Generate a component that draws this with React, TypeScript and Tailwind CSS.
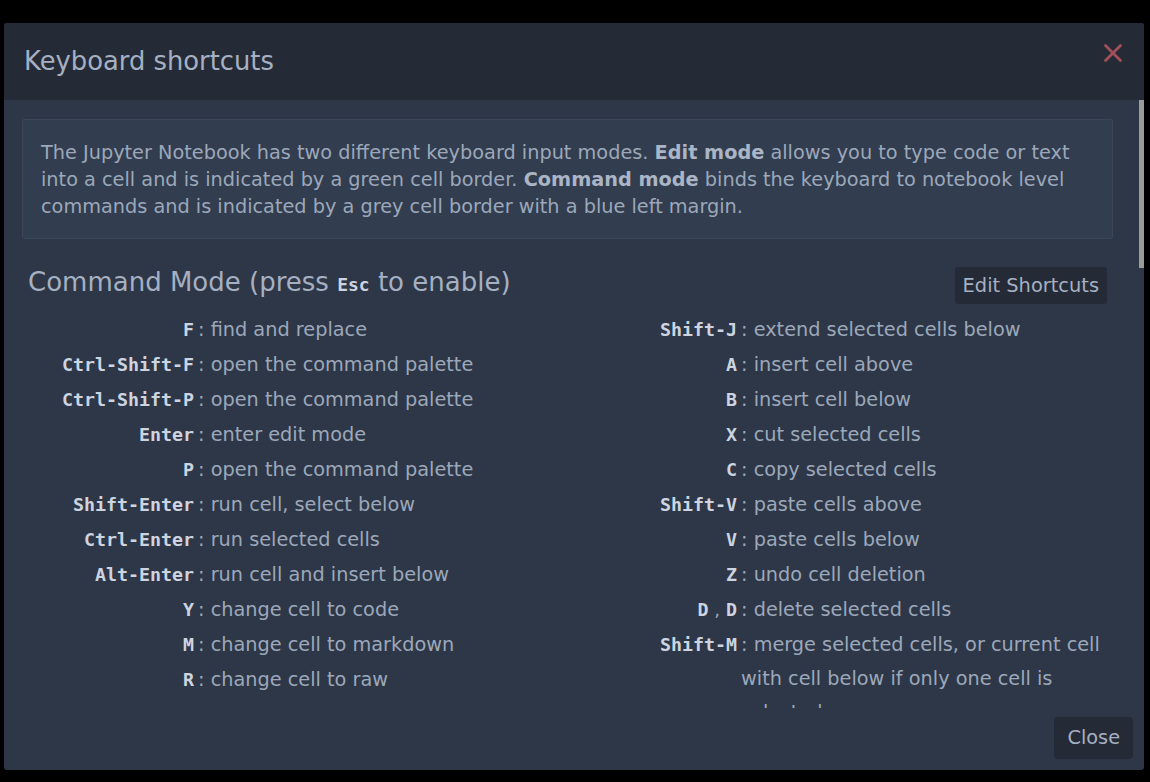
import { X } from "lucide-react";

interface Shortcut {
  keys: string[];
  desc: string;
}

const leftShortcuts: Shortcut[] = [
  { keys: ["F"], desc: "find and replace" },
  { keys: ["Ctrl-Shift-F"], desc: "open the command palette" },
  { keys: ["Ctrl-Shift-P"], desc: "open the command palette" },
  { keys: ["Enter"], desc: "enter edit mode" },
  { keys: ["P"], desc: "open the command palette" },
  { keys: ["Shift-Enter"], desc: "run cell, select below" },
  { keys: ["Ctrl-Enter"], desc: "run selected cells" },
  { keys: ["Alt-Enter"], desc: "run cell and insert below" },
  { keys: ["Y"], desc: "change cell to code" },
  { keys: ["M"], desc: "change cell to markdown" },
  { keys: ["R"], desc: "change cell to raw" },
];

const rightShortcuts: Shortcut[] = [
  { keys: ["Shift-J"], desc: "extend selected cells below" },
  { keys: ["A"], desc: "insert cell above" },
  { keys: ["B"], desc: "insert cell below" },
  { keys: ["X"], desc: "cut selected cells" },
  { keys: ["C"], desc: "copy selected cells" },
  { keys: ["Shift-V"], desc: "paste cells above" },
  { keys: ["V"], desc: "paste cells below" },
  { keys: ["Z"], desc: "undo cell deletion" },
  { keys: ["D", "D"], desc: "delete selected cells" },
  {
    keys: ["Shift-M"],
    desc: "merge selected cells, or current cell with cell below if only one cell is selected",
  },
];

function ShortcutRow({ item }: { item: Shortcut }) {
  return (
    <div className="flex items-start leading-[35px]">
      <div className="w-[166px] shrink-0 text-right font-['DejaVu_Sans_Mono',monospace] font-bold text-[18.3px] text-[#cdd4e0]">
        {item.keys.map((k, i) => (
          <span key={i}>
            {i > 0 && (
              <span className="font-['DejaVu_Sans',sans-serif] font-normal text-[#9ca8ba]">
                {" "}
                ,{" "}
              </span>
            )}
            {k}
          </span>
        ))}
      </div>
      <div className="ml-[4px] flex-1 text-[19.3px] text-[#9ca8ba] leading-[34px] pt-px">
        : {item.desc}
      </div>
    </div>
  );
}

export default function App() {
  return (
    <div className="h-[782px] w-full bg-black pt-[23px] pl-[4px] overflow-hidden font-['DejaVu_Sans',sans-serif]">
      <div className="w-[1140px] h-[747px] flex flex-col bg-[#2e3747] rounded-[3px] overflow-hidden">
        {/* header */}
        <div className="h-[77px] shrink-0 bg-[#252b36] flex items-start justify-between pl-[20px] pr-[16px]">
          <h4 className="mt-[23px] text-[25.8px] leading-[30px] text-[#a5b0c2]">
            Keyboard shortcuts
          </h4>
          <button className="mt-[15px] text-[#a14f58]">
            <X size={30} strokeWidth={2.2} />
          </button>
        </div>

        {/* body */}
        <div className="flex-1 flex overflow-hidden">
          <div className="flex-1 overflow-hidden pt-[19px] pl-[18px] pr-[26px]">
            <div className="border border-[#3b4759] bg-[#323d4f] rounded-[2px] px-[18px] pt-[19px] pb-[18px] text-[19.3px] leading-[27px] text-[#9ca8ba]">
              The Jupyter Notebook has two different keyboard input modes.{" "}
              <b className="text-[#aab5c6]">Edit mode</b> allows you to type
              code or text into a cell and is indicated by a green cell border.{" "}
              <b className="text-[#aab5c6]">Command mode</b> binds the keyboard
              to notebook level commands and is indicated by a grey cell border
              with a blue left margin.
            </div>

            <div className="px-[6px] mt-[23px]">
              <div className="flex items-start justify-between">
                <h4 className="text-[26px] leading-[40px] text-[#a5b0c2]">
                  Command Mode (press{" "}
                  <kbd className="font-['DejaVu_Sans_Mono',monospace] font-bold text-[18px] text-[#cdd4e0]">
                    Esc
                  </kbd>{" "}
                  to enable)
                </h4>
                <button className="mt-[5px] h-[37px] px-[8px] rounded-[3px] bg-[#252b36] text-[19.4px] text-[#a5b0c2]">
                  Edit Shortcuts
                </button>
              </div>

              <div className="mt-[7px] grid grid-cols-[543px_1fr]">
                <div className="flex flex-col">
                  {leftShortcuts.map((s, i) => (
                    <ShortcutRow key={i} item={s} />
                  ))}
                </div>
                <div className="flex flex-col">
                  {rightShortcuts.map((s, i) => (
                    <ShortcutRow key={i} item={s} />
                  ))}
                </div>
              </div>
            </div>
          </div>
          {/* scrollbar */}
          <div className="w-[5px] shrink-0 flex flex-col">
            <div className="h-[168px] bg-[#9b9b9b]" />
          </div>
        </div>

        {/* footer */}
        <div className="h-[62px] shrink-0 flex items-start justify-end pr-[11px] pt-[9px]">
          <button className="h-[42px] px-[13px] pt-px rounded-[4px] bg-[#252b36] text-[19.3px] text-[#a5b0c2]">
            Close
          </button>
        </div>
      </div>
    </div>
  );
}
